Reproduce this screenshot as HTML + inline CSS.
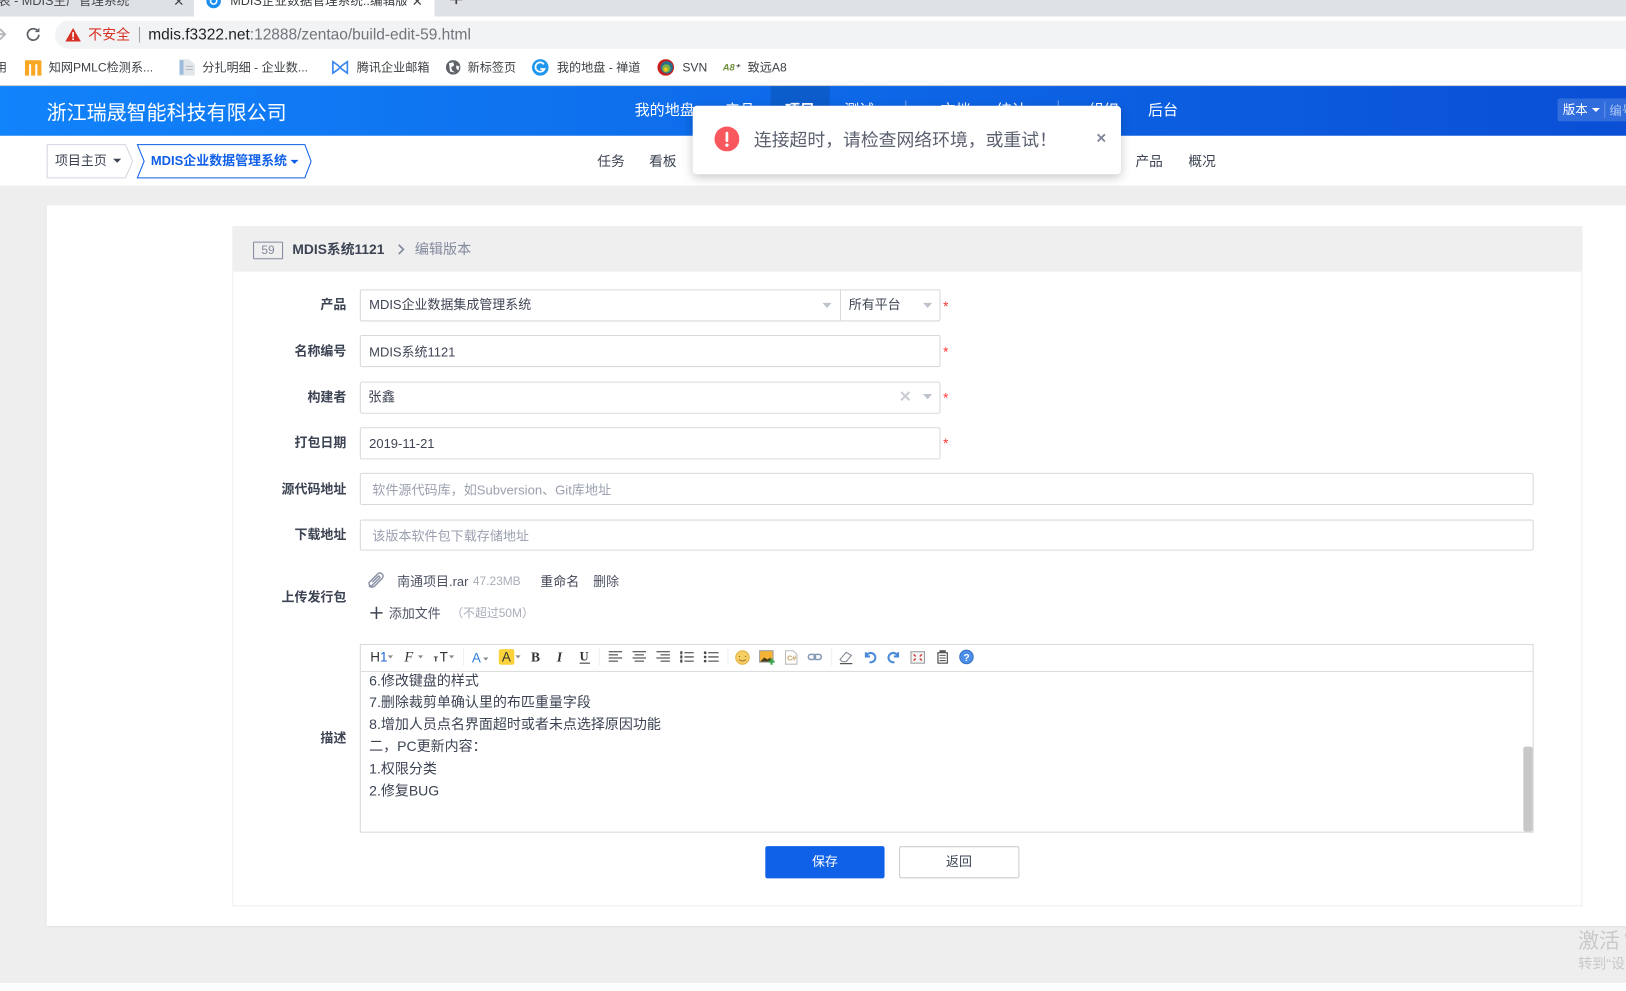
<!DOCTYPE html>
<html><head><meta charset="utf-8"><title>MDIS</title>
<style>
html,body{margin:0;padding:0;width:1626px;height:991px;overflow:hidden;background:#fff}
#s{position:absolute;left:0;top:0;width:1568px;height:956px;overflow:hidden;transform:scale(1.03699);transform-origin:0 0;font-family:"Liberation Sans","Noto Sans CJK SC",sans-serif;font-size:13px;color:#3c4353}
#s div,#s span.a,#s svg.a{position:absolute}
.t{white-space:nowrap;line-height:20px;height:20px;margin-top:-9px}
.l{white-space:nowrap;line-height:20px;height:20px;margin-top:-9px;width:100px;text-align:right;left:234px;font-weight:bold;color:#3c4353;font-size:12.5px}
.i{left:347px;width:557.5px;border:1px solid #d9d9d9;background:#fff;border-radius:2px}
.star{color:#f33;left:909.5px;font-size:13px}
.b{color:#3f4554;font-size:13px}
.ph{color:#9a9fae;font-size:12.6px}
.nav{color:#fff;font-size:14.5px}
.bm{font-size:11.7px;color:#3c4043}
.tb{left:-0.5px;top:-1px}
.ed{font-size:13.5px;color:#3c4353;left:356px}
</style></head><body>
<div id="s">
<!-- browser chrome -->
<div style="left:0;top:0;width:1568px;height:16px;background:#dee1e6"></div>
<div style="left:-20px;top:-10px;width:205px;height:26px;background:#dee1e6;border-radius:0 0 8px 0"></div>
<div style="left:187px;top:-10px;width:232px;height:26px;background:#fff;border-radius:0"></div>
<div class="t" style="left:-2px;top:0;font-size:12.2px;color:#45484c">表 - MDIS生产管理系统</div>
<div class="t" style="left:222px;top:0;width:170px;overflow:hidden;font-size:12.2px;color:#3c4043">MDIS企业数据管理系统::编辑版本</div>
<div class="t" style="left:167px;top:1px;font-size:13px;color:#45484c">✕</div>
<div class="t" style="left:397px;top:1px;font-size:13px;color:#45484c">✕</div>
<svg class="a" style="left:198px;top:-3px" width="16" height="12"><circle cx="8" cy="4" r="7" fill="#1a8fef"/><circle cx="8" cy="4" r="3" fill="none" stroke="#fff" stroke-width="1.5"/></svg>
<svg class="a" style="left:433px;top:-3px" width="14" height="10"><path d="M7 0V7M1 2.500H13" stroke="#444" stroke-width="1.600" fill="none"/></svg>
<div style="left:0;top:16px;width:1568px;height:31px;background:#fff"></div>
<div style="left:53px;top:20px;width:1530px;height:27px;background:#f1f3f4;border-radius:14px"></div>
<svg class="a" style="left:-6px;top:26px" width="14" height="14"><path d="M1 7H11M6 2l5 5-5 5" stroke="#b4b6b9" stroke-width="1.800" fill="none"/></svg>
<svg class="a" style="left:25px;top:26px" width="14" height="14"><path d="M11.500 4A5.500 5.500 0 1 0 12.500 7.500" stroke="#5f6368" stroke-width="1.700" fill="none"/><path d="M8.500 5H13V.8z" fill="#5f6368"/></svg>
<svg class="a" style="left:63px;top:27px" width="15" height="13"><path d="M7.500 0L15 13H0z" fill="#d93025"/><rect x="6.700" y="4" width="1.600" height="5" fill="#fff"/><rect x="6.700" y="10" width="1.600" height="1.600" fill="#fff"/></svg>
<div class="t" style="left:85px;top:33px;font-size:13.500px;color:#d93025">不安全</div>
<div style="left:134px;top:26px;width:1px;height:15px;background:#a0a3a7"></div>
<div class="t" style="left:143px;top:33px;font-size:14.930px;color:#202124">mdis.f3322.net<span style="color:#70757a">:12888/zentao/build-edit-59.html</span></div>
<!-- bookmarks -->
<div class="t bm" style="left:-5px;top:65px">用</div>
<svg class="a" style="left:24px;top:58px" width="16" height="15"><path d="M0 1.500Q0 0 1.500 0H14.500Q16 0 16 1.500V15H12V4H10V15H6V4H4V15H0z" fill="#f9a825"/></svg>
<div class="t bm" style="left:47px;top:65px">知网PMLC检测系...</div>
<svg class="a" style="left:173px;top:57px" width="15" height="16"><path d="M0 0H9L15 5V16H0z" fill="#e4e7ea"/><rect x="0" y="1" width="4" height="14" fill="#9dbbdc"/><path d="M6 7H13M6 10H13" stroke="#b5bac0"/></svg>
<div class="t bm" style="left:195px;top:65px">分扎明细 - 企业数...</div>
<svg class="a" style="left:320px;top:58px" width="16" height="14"><path d="M1 1.500V12.500L6 9 8 7 6 5zM15 1.500V12.500L10 9 8 7 10 5z" fill="none" stroke="#3a86f0" stroke-width="1.600"/></svg>
<div class="t bm" style="left:344px;top:65px">腾讯企业邮箱</div>
<svg class="a" style="left:430px;top:58px" width="14" height="14"><circle cx="7" cy="7" r="7" fill="#5f6368"/><path d="M3 3L7 2 8 5 5 7 6 10 9 12 4 11zM10 5l3 1-1 4-2-2z" fill="#fff"/></svg>
<div class="t bm" style="left:451px;top:65px">新标签页</div>
<svg class="a" style="left:513px;top:57px" width="16" height="16"><circle cx="8" cy="8" r="8" fill="#1f97ee"/><path d="M11.500 5A4.500 4.500 0 1 0 12 9.500H8" fill="none" stroke="#fff" stroke-width="1.700"/></svg>
<div class="t bm" style="left:537px;top:65px">我的地盘 - 禅道</div>
<svg class="a" style="left:634px;top:57px" width="16" height="16"><circle cx="8" cy="8" r="8" fill="#c8201d"/><circle cx="9" cy="8" r="6" fill="#2a6f8e"/><circle cx="8.500" cy="9" r="4" fill="#7cb342"/><circle cx="8" cy="10" r="2" fill="#f5c518"/></svg>
<div class="t bm" style="left:658px;top:65px">SVN</div>
<div class="t" style="left:697px;top:64px;font-size:9px;font-weight:bold;font-style:italic;color:#6e8f3a">A8<span style="color:#444">⁺</span></div>
<div class="t bm" style="left:721px;top:65px">致远A8</div>
<!-- header -->
<div style="left:0;top:82px;width:1568px;height:1px;background:#c9ccd1"></div>
<div style="left:0;top:83px;width:1568px;height:48px;background:linear-gradient(90deg,#1183fb,#0a4fd6)"></div>
<div class="t" style="left:45px;top:109.500px;font-size:19.300px;color:#fff;line-height:24px;height:24px;margin-top:-12px">浙江瑞晟智能科技有限公司</div>
<div style="left:743px;top:83px;width:57px;height:48px;background:rgba(0,0,0,.12)"></div>
<div class="t nav" style="left:612px;top:106px">我的地盘</div>
<div class="t nav" style="left:699px;top:106px">产品</div>
<div class="t nav" style="left:757px;top:106px;font-weight:bold">项目</div>
<div class="t nav" style="left:814px;top:106px">测试</div>
<div style="left:873px;top:97px;width:1px;height:18px;background:rgba(255,255,255,.45)"></div>
<div class="t nav" style="left:907px;top:106px">文档</div>
<div class="t nav" style="left:961px;top:106px">统计</div>
<div style="left:1020px;top:97px;width:1px;height:18px;background:rgba(255,255,255,.45)"></div>
<div class="t nav" style="left:1050px;top:106px">组织</div>
<div class="t nav" style="left:1107px;top:106px">后台</div>
<div style="left:1502px;top:95px;width:80px;height:22px;background:rgba(255,255,255,.16);border-radius:2px"></div>
<div class="t" style="left:1507px;top:105px;font-size:12px;color:#fff">版本</div>
<svg class="a" style="left:1535px;top:104px" width="8" height="5"><path d="M0 0H8L4 4z" fill="#fff"/></svg>
<div style="left:1547px;top:98px;width:1px;height:16px;background:rgba(255,255,255,.25)"></div>
<div class="t" style="left:1552px;top:106px;font-size:12px;color:#a9c4f2">编号</div>
<!-- subnav -->
<div style="left:0;top:131px;width:1568px;height:48px;background:#fff"></div>
<div style="left:0;top:179px;width:1568px;height:769px;background:#eeeeee"></div>
<svg class="a" style="left:44px;top:138px" width="262" height="35"><path d="M1.500 1.500H77L84 17.500 77 33.500H1.500z" fill="#fff" stroke="#d3d6e0"/><path d="M88.500 1.500H250L256 17.500 250 33.500H88.500L95 17.500z" fill="#fff" stroke="#0f5fe8"/></svg>
<div class="t" style="left:53px;top:154px;font-size:12.500px;color:#3c4353">项目主页</div>
<svg class="a" style="left:109px;top:153px" width="8" height="5"><path d="M0 0H8L4 4z" fill="#3c4353"/></svg>
<div class="t" style="left:145.500px;top:154px;font-size:12.500px;font-weight:bold;color:#0f5fe8">MDIS企业数据管理系统</div>
<svg class="a" style="left:280px;top:154px" width="8" height="5"><path d="M0 0H8L4 4z" fill="#0f5fe8"/></svg>
<div class="t" style="left:576px;top:155px;font-size:13.200px">任务</div>
<div class="t" style="left:626px;top:155px;font-size:13.200px">看板</div>
<div class="t" style="left:1095px;top:155px;font-size:13.200px">产品</div>
<div class="t" style="left:1146px;top:155px;font-size:13.200px">概况</div>
<!-- toast -->
<div style="left:668px;top:102px;width:413px;height:66px;background:#fff;border-radius:4px;box-shadow:0 3px 10px rgba(0,0,0,.22)"></div>
<svg class="a" style="left:689px;top:122px" width="24" height="24"><circle cx="12" cy="12" r="12" fill="#f9575e"/><rect x="10.700" y="5" width="2.600" height="10" rx="1.300" fill="#fff"/><circle cx="12" cy="18" r="1.600" fill="#fff"/></svg>
<div class="t" style="left:727px;top:135px;font-size:17.200px;color:#5c6170;line-height:24px;height:24px;margin-top:-12px">连接超时，请检查网络环境，或重试！</div>
<svg class="a" style="left:1058px;top:129px" width="8" height="8"><path d="M.5.500L7.500 7.500M7.500.500L.5 7.500" stroke="#7b8296" stroke-width="1.700"/></svg>
<!-- card -->
<div style="left:45px;top:198px;width:1523px;height:695px;background:#fff;box-shadow:0 1px 2px rgba(0,0,0,.08)"></div>
<div style="left:224px;top:218px;width:1300px;height:654px;border:1px solid #eee;background:#fff"></div>
<div style="left:225px;top:219px;width:1300px;height:43px;background:#efefef"></div>
<div style="left:244px;top:233px;width:27px;height:15px;border:1px solid #838a9d;text-align:center;line-height:16px;font-size:11.500px;color:#838a9d;border-radius:1px">59</div>
<div class="t" style="left:282px;top:240px;font-weight:bold;font-size:13.300px;color:#3c4353">MDIS系统1121</div>
<svg class="a" style="left:383px;top:235px" width="8" height="11"><path d="M1.500 1L6 5.500 1.500 10" fill="none" stroke="#838a9d" stroke-width="1.600"/></svg>
<div class="t" style="left:400px;top:240px;font-size:13.600px;color:#838a9d">编辑版本</div>
<!-- form -->
<div class="l" style="top:293px">产品</div>
<div class="i" style="top:279px;height:29px"></div>
<div style="left:810px;top:279px;width:1px;height:31px;background:#d9d9d9"></div>
<div class="t b" style="left:356px;top:293px;font-size:12.500px">MDIS企业数据集成管理系统</div>
<svg class="a" style="left:793px;top:292px" width="9" height="5"><path d="M0 0H9L4.500 5z" fill="#bfc3cc"/></svg>
<div class="t b" style="left:818.500px;top:293px;font-size:12.500px">所有平台</div>
<svg class="a" style="left:890px;top:292px" width="9" height="5"><path d="M0 0H9L4.500 5z" fill="#bfc3cc"/></svg>
<div class="t star" style="top:295px">*</div>
<div class="l" style="top:338px">名称编号</div>
<div class="i" style="top:323px;height:29px"></div>
<div class="t b" style="left:356px;top:339px;font-size:12.500px">MDIS系统1121</div>
<div class="t star" style="top:339px">*</div>
<div class="l" style="top:382px">构建者</div>
<div class="i" style="top:368px;height:29px"></div>
<div class="t b" style="left:355px;top:382px;font-size:13px">张鑫</div>
<svg class="a" style="left:868px;top:377px" width="10" height="10"><path d="M1 1L9 9M9 1L1 9" stroke="#c9ccd3" stroke-width="2"/></svg>
<svg class="a" style="left:890px;top:380px" width="9" height="5"><path d="M0 0H9L4.500 5z" fill="#bfc3cc"/></svg>
<div class="t star" style="top:383px">*</div>
<div class="l" style="top:426px">打包日期</div>
<div class="i" style="top:412px;height:29px"></div>
<div class="t b" style="left:356px;top:427px;font-size:12.500px">2019-11-21</div>
<div class="t star" style="top:427px">*</div>
<div class="l" style="top:471px">源代码地址</div>
<div class="i" style="top:456px;height:29px;width:1130px"></div>
<div class="t ph" style="left:359px;top:472px">软件源代码库，如Subversion、Git库地址</div>
<div class="l" style="top:515px">下载地址</div>
<div class="i" style="top:501px;height:28px;width:1130px"></div>
<div class="t ph" style="left:359px;top:516px">该版本软件包下载存储地址</div>
<div class="l" style="top:575px">上传发行包</div>
<svg class="a" style="left:353px;top:550px" width="18" height="18"><path d="M15.500 3.500a3 3 0 0 0-4.300 0L3.400 11.300a2 2 0 0 0 2.900 2.900L13 7.500a1 1 0 0 0-1.500-1.500L6 11.500M15.500 3.500a3 3 0 0 1 0 4.300L8.500 15a4 4 0 0 1-5.700 0" fill="none" stroke="#8b92a5" stroke-width="1.400"/></svg>
<div class="t" style="left:383px;top:560px;font-size:12.500px;color:#4c5263">南通项目.rar</div>
<div class="t" style="left:456px;top:560px;font-size:11.500px;color:#a8acb8">47.23MB</div>
<div class="t" style="left:521px;top:560px;font-size:12.500px;color:#3f4554">重命名</div>
<div class="t" style="left:572px;top:560px;font-size:12.500px;color:#4c5263">删除</div>
<svg class="a" style="left:357px;top:585px" width="12" height="12"><path d="M6 0V12M0 6H12" stroke="#3c4353" stroke-width="1.500"/></svg>
<div class="t" style="left:375px;top:591px;font-size:12.500px;color:#4c5263">添加文件</div>
<div class="t" style="left:435px;top:591px;font-size:11.500px;color:#a8acb8">（不超过50M）</div>
<!-- editor -->
<div class="l" style="top:711px">描述</div>
<div style="left:347px;top:621px;width:1130px;height:179.500px;border:1px solid #d9d9d9;background:#fff"></div>
<div style="left:348px;top:647px;width:1130px;height:1px;background:#dcdcdc"></div>
<svg class="a tb" width="1568" height="956" style="pointer-events:none">
<g font-family="Liberation Sans" font-size="13" fill="#333">
<text x="357" y="639">H<tspan fill="#1a66d8">1</tspan></text>
<text x="390" y="639" font-family="Liberation Serif" font-style="italic" font-size="14">F</text>
<text x="418" y="639" font-size="9" font-weight="bold">т</text><text x="424" y="639">T</text>
<text x="455" y="640" fill="#2f7bdc">A</text>
<rect x="481" y="627" width="15" height="15" rx="2" fill="#fbd13c"/><text x="484" y="639">A</text>
<text x="512" y="639" font-family="Liberation Serif" font-weight="bold">B</text>
<text x="537" y="639" font-family="Liberation Serif" font-weight="bold" font-style="italic">I</text>
<text x="559" y="638" font-family="Liberation Serif" font-weight="bold" font-size="12">U</text>
</g>
<path d="M559 640.500H569" stroke="#333"/>
<g fill="#8a8a8a"><path d="M374 633h5l-2.500 3zM403 633h5l-2.500 3zM433 633h5l-2.500 3zM466 635h5l-2.500 3zM497 633h5l-2.500 3z"/></g>
<g stroke="#e0e0e0" stroke-dasharray="1 1"><path d="M447 627V642M578 627V642M702 627V642M802 627V642"/></g>
<g stroke="#333" fill="none"><path d="M587 629.500H600M587 632.500H596M587 635.500H600M587 638.500H596"/><path d="M610 629.500H623M612 632.500H621M610 635.500H623M612 638.500H621"/><path d="M633 629.500H646M637 632.500H646M633 635.500H646M637 638.500H646"/><path d="M660 630.500H669M660 634.500H669M660 638.500H669"/><path d="M683 630.500H693M683 634.500H693M683 638.500H693"/></g>
<g fill="#444"><rect x="656" y="629" width="2" height="3"/><rect x="656" y="633" width="2" height="3"/><rect x="656" y="637" width="2" height="3"/><circle cx="680" cy="630.500" r="1.300"/><circle cx="680" cy="634.500" r="1.300"/><circle cx="680" cy="638.500" r="1.300"/></g>
<circle cx="716" cy="635" r="6.500" fill="#f6cf62" stroke="#e2b04a"/><path d="M713 633.500v1M719 633.500v1" stroke="#7a5a10"/><path d="M712.500 637q3.500 3 7 0" fill="none" stroke="#a0742a"/>
<rect x="732.500" y="628.500" width="13" height="11" fill="#f7b334" stroke="#9aa0a6"/><path d="M733 639l4-4 3 2 3-2v4z" fill="#4a3a1a"/><path d="M744 636v6M741 639h6" stroke="#3aa84a" stroke-width="2"/>
<path d="M757.500 628.500H765L768.500 632V641.500H757.500z" fill="#fff" stroke="#bbb"/><text x="759" y="638" font-size="7" font-weight="bold" fill="#c9a060" font-family="Liberation Sans">C#</text>
<g fill="none" stroke="#8398b4" stroke-width="1.500"><rect x="779.500" y="632" width="7" height="5" rx="2.500"/><rect x="785" y="632" width="7" height="5" rx="2.500"/></g>
<path d="M810 637l6-7 5 3-5 6h-4z" fill="#fff" stroke="#7c8794"/><path d="M810 641H822" stroke="#333"/>
<path d="M835 630v4h4M835.500 633.500a4.500 4.500 0 1 1 3 6" fill="none" stroke="#4a8ad8" stroke-width="2"/>
<path d="M866 630v4h-4M865.500 633.500a4.500 4.500 0 1 0-3 6" fill="none" stroke="#4a8ad8" stroke-width="2"/>
<rect x="878.500" y="629.500" width="13" height="11" fill="#f4f4f4" stroke="#999"/><path d="M881 632l2 2M889 632l-2 2M881 638l2-2M889 638l-2-2" stroke="#c33" stroke-width="1.300"/>
<path d="M904.500 630.500H913.500V640.500H904.500z" fill="#fff" stroke="#333"/><path d="M906 633H912M906 635.500H912M906 638H912" stroke="#555"/><rect x="906" y="628" width="6" height="2" fill="#555"/>
<circle cx="932" cy="634.500" r="6.500" fill="#4d8fe8" stroke="#3a74c8"/><text x="929" y="638.500" font-size="10" font-weight="bold" fill="#fff" font-family="Liberation Sans">?</text>
</svg>
<div class="t ed" style="top:656px">6.修改键盘的样式</div>
<div class="t ed" style="top:677px">7.删除裁剪单确认里的布匹重量字段</div>
<div class="t ed" style="top:698px">8.增加人员点名界面超时或者未点选择原因功能</div>
<div class="t ed" style="top:719px">二，PC更新内容：</div>
<div class="t ed" style="top:741px">1.权限分类</div>
<div class="t ed" style="top:762px">2.修复BUG</div>
<div style="left:1469px;top:720px;width:9px;height:82px;background:#c8c8c8;border-radius:2px"></div>
<!-- buttons -->
<div style="left:738px;top:816px;width:115px;height:31px;background:#0f62e8;border-radius:2px;color:#fff;text-align:center;line-height:31px;font-size:12.500px">保存</div>
<div style="left:867px;top:816px;width:113.500px;height:29px;border:1px solid #ccc;border-radius:2px;background:#fff;color:#3c4353;text-align:center;line-height:29px;font-size:12.500px">返回</div>
<!-- watermark -->
<div class="t" style="left:1522px;top:908px;font-size:20px;color:#c9c9c9;line-height:26px;height:26px;margin-top:-13px;word-spacing:-1px">激活 Windows</div>
<div class="t" style="left:1522px;top:929px;font-size:13.500px;color:#c9c9c9">转到“设置”以激活 Windows。</div>
</div>
</body></html>
